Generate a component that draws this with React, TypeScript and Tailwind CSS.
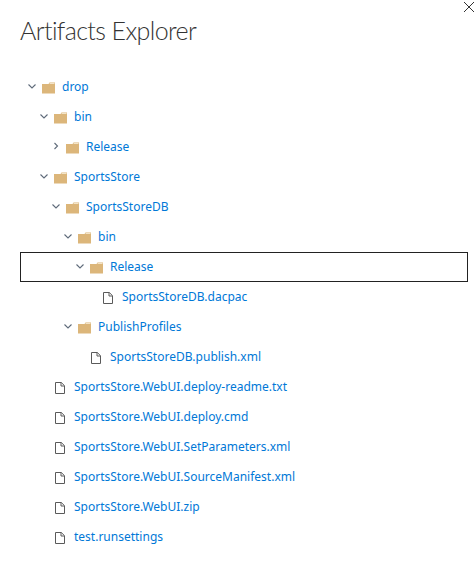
type Row = {
  name: string
  level: number
  kind: 'open' | 'closed' | 'file'
  selected?: boolean
}

const rows: Row[] = [
  { name: 'drop', level: 0, kind: 'open' },
  { name: 'bin', level: 1, kind: 'open' },
  { name: 'Release', level: 2, kind: 'closed' },
  { name: 'SportsStore', level: 1, kind: 'open' },
  { name: 'SportsStoreDB', level: 2, kind: 'open' },
  { name: 'bin', level: 3, kind: 'open' },
  { name: 'Release', level: 4, kind: 'open', selected: true },
  { name: 'SportsStoreDB.dacpac', level: 5, kind: 'file' },
  { name: 'PublishProfiles', level: 3, kind: 'open' },
  { name: 'SportsStoreDB.publish.xml', level: 4, kind: 'file' },
  { name: 'SportsStore.WebUI.deploy-readme.txt', level: 1, kind: 'file' },
  { name: 'SportsStore.WebUI.deploy.cmd', level: 1, kind: 'file' },
  { name: 'SportsStore.WebUI.SetParameters.xml', level: 1, kind: 'file' },
  { name: 'SportsStore.WebUI.SourceManifest.xml', level: 1, kind: 'file' },
  { name: 'SportsStore.WebUI.zip', level: 1, kind: 'file' },
  { name: 'test.runsettings', level: 1, kind: 'file' },
]

const indent = ['pl-[5px]', 'pl-[17px]', 'pl-[29px]', 'pl-[41px]', 'pl-[53px]', 'pl-[65px]']

function Chevron({ open }: { open: boolean }) {
  return (
    <svg width="12" height="12" viewBox="0 0 12 12" fill="none" stroke="#5f6b7a" strokeWidth="1.1" className="-mt-[2px]">
      {open ? <path d="M2.5 4.5 6 8l3.5-3.5" /> : <path d="M4.5 3 7.5 6 4.5 9" />}
    </svg>
  )
}

function Folder() {
  return (
    <svg width="13" height="12" viewBox="0 0 13 12" className="mt-[2px]">
      <path d="M0 2h6.5l1-1.5H13V11.5H0z" fill="#dcb67a" />
      <path d="M7.6 1.5H12.5" stroke="#f3e4c8" strokeWidth="1" />
    </svg>
  )
}

function FileIcon() {
  return (
    <svg width="10" height="12" viewBox="0 0 10 12" fill="none" stroke="#5a5a5a" strokeWidth="1" className="mt-[1px]">
      <path d="M.5.5h5.8l3.2 3.2v7.8H.5z" />
      <path d="M6 .5v3.5h3.5" />
    </svg>
  )
}

function TreeRow({ row }: { row: Row }) {
  return (
    <div
      className={`flex h-[30px] w-[448px] items-center border ${indent[row.level]} ${
        row.selected ? 'border-[#222222]' : 'border-transparent'
      }`}
    >
      {row.kind === 'file' ? (
        <>
          <span className="w-[17px] shrink-0" />
          <span className="w-[19px] shrink-0">
            <FileIcon />
          </span>
        </>
      ) : (
        <>
          <span className="w-[16px] shrink-0">
            <Chevron open={row.kind === 'open'} />
          </span>
          <span className="w-[20px] shrink-0">
            <Folder />
          </span>
        </>
      )}
      <span className="text-[12px] text-[#0078d7]">{row.name}</span>
    </div>
  )
}

export default function App() {
  return (
    <div className="relative h-[588px] w-[474px] overflow-hidden bg-white pl-5 pt-[13px] font-['Noto_Sans',sans-serif]">
      <svg width="10" height="10" viewBox="0 0 10 10" stroke="#333333" className="absolute right-0 top-[2px]">
        <path d="M0 0l10 10M10 0L0 10" />
      </svg>
      <h1 className="h-[59px] font-['Lato',sans-serif] text-[25px] font-light leading-[34px] tracking-[-0.6px] text-[#333333]">
        Artifacts Explorer
      </h1>
      <div>
        {rows.map((row, i) => (
          <TreeRow key={i} row={row} />
        ))}
      </div>
    </div>
  )
}
